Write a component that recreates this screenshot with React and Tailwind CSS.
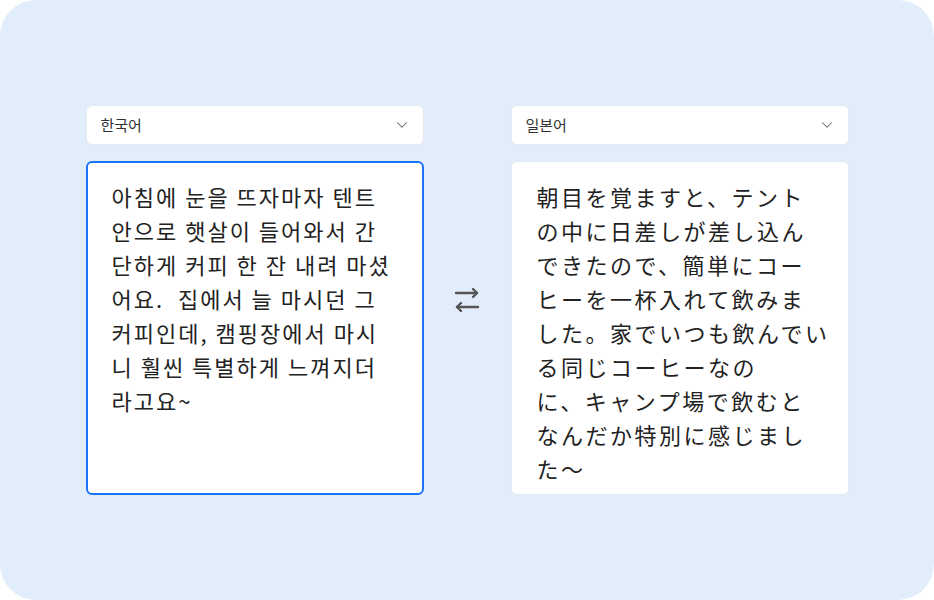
import { ChevronDown } from 'lucide-react';

const koLines = [
  '아침에 눈을 뜨자마자 텐트',
  '안으로 햇살이 들어와서 간',
  '단하게 커피 한 잔 내려 마셨',
  '어요.  집에서 늘 마시던 그',
  '커피인데, 캠핑장에서 마시',
  '니 훨씬 특별하게 느껴지더',
  '라고요~',
];

const jaLines = [
  '朝目を覚ますと、テント',
  'の中に日差しが差し込ん',
  'できたので、簡単にコー',
  'ヒーを一杯入れて飲みま',
  'した。家でいつも飲んでい',
  'る同じコーヒーなの',
  'に、キャンプ場で飲むと',
  'なんだか特別に感じまし',
  'た〜',
];

function LangSelect({ label }) {
  return (
    <div className="h-10 bg-white rounded-md border border-[#e6eaf0] flex items-center justify-between pl-[14px] pr-[12px] text-[15px] text-[#333]">
      <span>{label}</span>
      <ChevronDown size={18} strokeWidth={1.4} className="text-[#666]" />
    </div>
  );
}

export default function App() {
  return (
    <div className="w-[934px] h-[600px] bg-white">
      <div
        className="w-full h-full rounded-[36px] bg-[#e1edfb] flex items-center justify-center"
        style={{ fontFamily: '"Noto Sans CJK KR", "Noto Sans CJK JP", sans-serif' }}
      >
        {/* source */}
        <div className="w-[338px] flex flex-col gap-4">
          <LangSelect label="한국어" />
          <div className="h-[334px] bg-white rounded-md border-2 border-[#1a73f8] pl-6 pr-4 pt-4 text-[22px] leading-[34px] tracking-[2px] text-[#222] whitespace-pre">
            {koLines.map((l, i) => (
              <div key={i}>{l}</div>
            ))}
          </div>
        </div>

        {/* swap */}
        <div className="w-[87px] flex justify-center">
          <svg width="26" height="24" viewBox="0 0 26 24" fill="none" stroke="#555" strokeWidth="2.4" strokeLinecap="round" strokeLinejoin="round">
            <path d="M2 5h21" />
            <path d="M19 1l4 4-4 4" />
            <path d="M24 19H3" />
            <path d="M7 15l-4 4 4 4" />
          </svg>
        </div>

        {/* target */}
        <div className="w-[338px] flex flex-col gap-4">
          <LangSelect label="일본어" />
          <div
            className="h-[334px] bg-white rounded-md border border-[#e6eaf0] pl-[25px] pr-4 pt-[17px] text-[22px] leading-[34px] tracking-[2.5px] text-[#222] whitespace-pre"
            style={{ fontFamily: '"Noto Sans CJK JP", sans-serif' }}
          >
            {jaLines.map((l, i) => (
              <div key={i}>{l}</div>
            ))}
          </div>
        </div>
      </div>
    </div>
  );
}
